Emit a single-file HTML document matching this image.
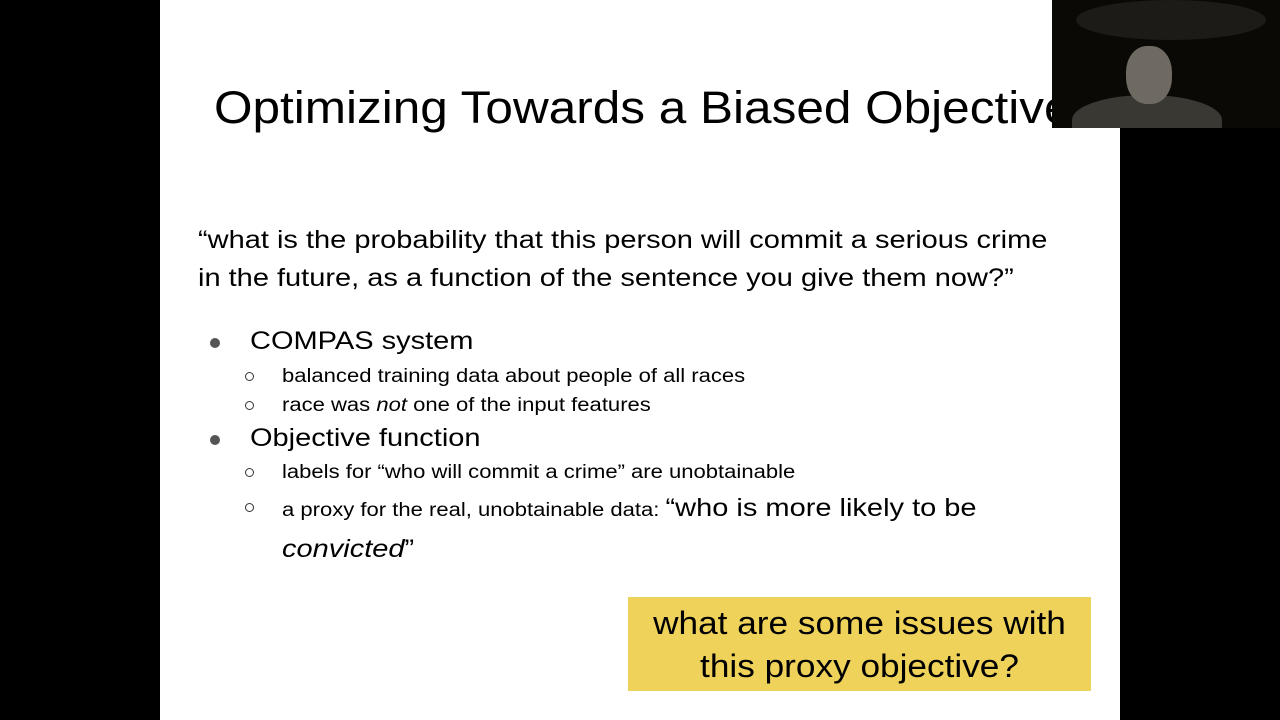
<!DOCTYPE html>
<html><head><style>
body{margin:0;width:1280px;height:720px;background:#000;position:relative;overflow:hidden;font-family:"Liberation Sans",sans-serif;color:#000}
.slide{position:absolute;left:160px;top:0;width:960px;height:720px;background:#fff}
.t{position:absolute;white-space:nowrap;transform-origin:0 0;transform:scaleX(1.16)}
.dot{position:absolute;width:10px;height:10px;border-radius:50%;background:#555}
.circ{position:absolute;width:7px;height:7px;border-radius:50%;border:1.3px solid #333}
</style></head><body>
<div class="slide"></div>
<div class="t" style="left:214px;top:82px;font-size:45px;transform:scaleX(1.1)">Optimizing Towards a Biased Objective</div>
<div class="t" style="left:198px;top:221px;font-size:25px;line-height:38px">“what is the probability that this person will commit a serious crime<br>in the future, as a function of the sentence you give them now?”</div>
<div class="dot" style="left:210px;top:338px"></div>
<div class="t" style="left:250px;top:327px;font-size:25px">COMPAS system</div>
<div class="circ" style="left:245px;top:372px"></div>
<div class="t" style="left:282px;top:366px;font-size:19px">balanced training data about people of all races</div>
<div class="circ" style="left:245px;top:401px"></div>
<div class="t" style="left:282px;top:395px;font-size:19px">race was <i>not</i> one of the input features</div>
<div class="dot" style="left:210px;top:435px"></div>
<div class="t" style="left:250px;top:424px;font-size:25px">Objective function</div>
<div class="circ" style="left:245px;top:468px"></div>
<div class="t" style="left:282px;top:462px;font-size:19px">labels for “who will commit a crime” are unobtainable</div>
<div class="circ" style="left:245px;top:503px"></div>
<div class="t" style="left:282px;top:489px;font-size:19px;line-height:38px">a proxy for the real, unobtainable data: <span style="font-size:25px">“who is more likely to be</span><br><span style="font-size:25px"><i>convicted</i>”</span></div>
<div style="position:absolute;left:628px;top:597px;width:463px;height:94px;background:#efd259"></div>
<div class="t" style="left:628px;top:602px;width:463px;text-align:center;font-size:32px;line-height:43px;transform-origin:50% 0;transform:scaleX(1.1)">what are some issues with<br>this proxy objective?</div>
<div style="position:absolute;left:1052px;top:0;width:228px;height:128px;background:#0a0906;overflow:hidden;z-index:5">
<div style="position:absolute;left:24px;top:0;width:190px;height:40px;background:#1c1b18;border-radius:50%"></div>
<div style="position:absolute;left:20px;top:95px;width:150px;height:50px;background:#3a3833;border-radius:50% 50% 0 0"></div>
<div style="position:absolute;left:74px;top:46px;width:46px;height:58px;background:#6e6a62;border-radius:45%"></div>
</div>
</body></html>
